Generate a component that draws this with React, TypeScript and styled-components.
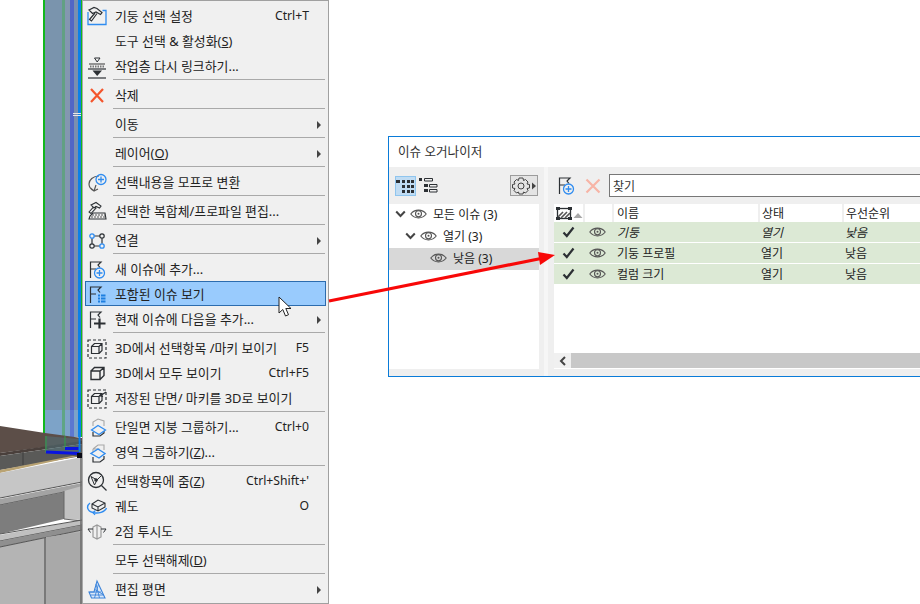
import React from "react";
import styled, { createGlobalStyle } from "styled-components";

const Global = createGlobalStyle`
  html, body { margin: 0; padding: 0; background: #fff; }
  body { font-family: "Noto Sans", "Noto Sans CJK KR", sans-serif; }
`;

const Page = styled.div`
  position: relative;
  width: 920px;
  height: 604px;
  overflow: hidden;
  background: #fff;
`;
const SceneSvg = styled.svg`
  position: absolute;
  left: 0;
  top: 0;
`;
const ArrowSvg = styled.svg`
  position: absolute;
  left: 0;
  top: 0;
  pointer-events: none;
`;

/* context menu */
const Menu = styled.div`
  position: absolute;
  left: 82px;
  top: 0;
  width: 247px;
  height: 604px;
  box-sizing: border-box;
  padding: 3px 2px 0 2px;
  background: #f0f0f0;
  border: 1px solid #a0a0a0;
  border-left-color: #a8a8a8;
  color: #222;
  font-size: 12.9px;
  isolation: isolate;
`;
const Row = styled.div<{ $active?: boolean }>`
  display: flex;
  align-items: center;
  height: 25px;
  box-sizing: border-box;
  padding-right: 17px;
  position: relative;
  ${(p) =>
    p.$active
      ? `&::before {
          content: "";
          position: absolute;
          inset: -1px 0 1px 0;
          z-index: -1;
          background: #99cbfd;
          border: 1px solid #2c6cae;
        }`
      : ""}
`;
const IconSlot = styled.span`
  flex: 0 0 24px;
  width: 24px;
  height: 24px;
  margin-right: 6px;
  display: flex;
`;
const Label = styled.span`
  flex: 1;
  white-space: pre;
  line-height: 1;
`;
const Shortcut = styled.span`
  white-space: pre;
  font-size: 12.2px;
  line-height: 1;
`;
const SubArrow = styled.span`
  position: absolute;
  right: 5px;
  top: 9px;
  width: 0;
  height: 0;
  border-left: 4px solid #444;
  border-top: 4px solid transparent;
  border-bottom: 4px solid transparent;
`;
const Sep = styled.div`
  height: 4px;
  margin: 0 1px 0 28px;
  box-sizing: border-box;
  border-top: 1px solid #a9a9a9;
`;
const Mn = styled.span`
  text-decoration: underline;
  text-underline-offset: 1px;
`;
const Cursor = styled.svg`
  position: absolute;
  left: 195px;
  top: 295px;
`;

/* organizer window */
const Organizer = styled.div`
  position: absolute;
  left: 388px;
  top: 136px;
  width: 600px;
  height: 241px;
  box-sizing: border-box;
  border: 1px solid #0a7bd8;
  display: flex;
  flex-direction: column;
  background: #efefef;
  color: #222;
  font-size: 12px;
`;
const TitleBar = styled.div`
  height: 30px;
  flex: 0 0 30px;
  box-sizing: border-box;
  background: #fff;
  display: flex;
  align-items: center;
  padding: 0 0 4px 9px;
  font-size: 12.6px;
  color: #333;
`;
const Panes = styled.div`
  flex: 1;
  display: flex;
  min-height: 0;
`;
const LeftPane = styled.div`
  width: 150px;
  flex: 0 0 150px;
  display: flex;
  flex-direction: column;
`;
const Divider = styled.div`
  flex: 0 0 10px;
  box-sizing: border-box;
  border-left: 5px solid #efefef;
  border-right: 1px solid #efefef;
  background: #f6f6f6;
`;
const RightPane = styled.div`
  flex: 1;
  display: flex;
  flex-direction: column;
  padding-left: 5px;
  min-width: 0;
`;
const LeftTools = styled.div`
  height: 37px;
  flex: 0 0 37px;
  display: flex;
  align-items: center;
  padding: 0 1px 0 6px;
  box-sizing: border-box;
`;
const ToggleOn = styled.span`
  width: 21px;
  height: 20px;
  box-sizing: border-box;
  background: #c0dcf3;
  border: 1px solid #8fc5ee;
  display: flex;
  align-items: center;
  justify-content: center;
`;
const ToggleOff = styled.span`
  width: 21px;
  height: 20px;
  margin-left: 2px;
  display: flex;
  align-items: center;
  justify-content: center;
`;
const GearButton = styled.span`
  margin-left: auto;
  width: 28px;
  height: 21px;
  box-sizing: border-box;
  background: #e4e4e4;
  border: 1px solid #9c9c9c;
  display: flex;
  align-items: center;
  justify-content: center;
`;
const Tree = styled.div`
  height: 165px;
  flex: 0 0 165px;
  background: #fff;
`;
const TreeRow = styled.div<{ $level: number; $selected?: boolean }>`
  height: 22px;
  display: flex;
  align-items: center;
  box-sizing: border-box;
  padding-left: ${(p) => 6 + p.$level * 10}px;
  padding-bottom: 2px;
  background: ${(p) => (p.$selected ? "#d8d8d8" : "transparent")};
`;
const ChevronSlot = styled.span<{ $hidden?: boolean }>`
  width: 11px;
  height: 8px;
  margin-right: 4px;
  display: flex;
  visibility: ${(p) => (p.$hidden ? "hidden" : "visible")};
`;
const TreeLabel = styled.span`
  margin-left: 6px;
  white-space: pre;
`;
const RightTools = styled.div`
  height: 37px;
  flex: 0 0 37px;
  display: flex;
  align-items: center;
  box-sizing: border-box;
`;
const FlagSlot = styled.span`
  width: 24px;
  height: 24px;
  display: flex;
`;
const XSlot = styled.span`
  width: 24px;
  height: 24px;
  margin-left: 3px;
  display: flex;
`;
const SearchBox = styled.div`
  margin-left: 4px;
  flex: 1;
  height: 23px;
  box-sizing: border-box;
  border: 1px solid #777;
  background: #fff;
  display: flex;
  align-items: center;
  padding-left: 3px;
  color: #333;
`;
const Table = styled.div`
  height: 165px;
  flex: 0 0 165px;
  background: #fff;
  display: flex;
  flex-direction: column;
`;
const COLS = "29px 29px 146px 84px 1fr";
const HeaderRow = styled.div`
  display: grid;
  grid-template-columns: ${COLS};
  height: 18px;
  flex: 0 0 18px;
  background: #fff;
`;
const HeadCell = styled.div<{ $first?: boolean; $pad?: number }>`
  box-sizing: border-box;
  border-left: ${(p) => (p.$first ? "0" : "2px solid #efefef")};
  padding-left: ${(p) => p.$pad ?? 2}px;
  display: flex;
  align-items: center;
`;
const DataRow = styled.div<{ $italic?: boolean }>`
  display: grid;
  grid-template-columns: ${COLS};
  height: 20px;
  flex: 0 0 20px;
  margin-bottom: 1px;
  background: #dce9d5;
  font-style: ${(p) => (p.$italic ? "italic" : "normal")};
`;
const DataCell = styled.div<{ $pad?: number }>`
  box-sizing: border-box;
  padding-left: ${(p) => p.$pad ?? 3}px;
  display: flex;
  align-items: center;
  white-space: pre;
`;
const IconCell = styled.div`
  display: flex;
  align-items: center;
  justify-content: center;
`;
const Filler = styled.div`
  flex: 1;
`;
const ScrollBar = styled.div`
  height: 15px;
  flex: 0 0 15px;
  margin-bottom: 1px;
  display: flex;
`;
const ScrollBtn = styled.span`
  width: 17px;
  flex: 0 0 17px;
  background: #f0f0f0;
  display: flex;
  align-items: center;
  justify-content: center;
`;
const ScrollTrack = styled.span`
  flex: 1;
  background: #c8c8c8;
`;

const D = "#2c3034";
const B = "#2f8cf0";

const base = { fill: "none", stroke: D, strokeWidth: 1.2 };
const blue = { fill: "none", stroke: B, strokeWidth: 1.3 };

const flagBase = <path d="M5.5 20V4H16L13 7L15 9.500M5.500 11H11" {...base} />;

const cube = (
  <path d="M6 9H15V17.500H6ZM6 9L9.500 5.500H19V13.500L15 17.500M15 9L19 5.500" fill="none" stroke={D} strokeWidth="1.400" />
);
const smallCube = (
  <path d="M6.500 9.500H14V16.500H6.500ZM6.500 9.500L9.500 6.500H17V13.500L14 16.500M14 9.500L17 6.500" fill="none" stroke={D} strokeWidth="1.200" />
);
const dashed = <rect x="3" y="3" width="18" height="18" fill="none" stroke={D} strokeWidth="1.200" strokeDasharray="3 2" />;

const icons: Record<string, React.ReactNode> = {
  hammer: (
    <>
      <path d="M3 7V19.500H21V5.500H17.500" {...blue} />
      <path d="M10 8L4.500 14.500L6.500 16L12 8.500" fill="#f0f0f0" stroke={D} strokeWidth="1.200" />
      <path d="M4 5L9 2.500L12 3.500L17 7.500L15.500 9.500L11 7L7.500 8.500Z" fill="#f0f0f0" stroke={D} strokeWidth="1.200" />
    </>
  ),
  level: (
    <>
      <path d="M9.5 3H15L12.2 7Z" {...base} strokeWidth={1} />
      <path d="M4 9H20" {...base} stroke="#555" />
      <path d="M5 11.5H19" stroke="#777" strokeWidth="2" strokeDasharray="1.5 1" />
      <path d="M3 14H21" {...base} />
      <path d="M7.5 15.5H17L12.2 21Z" fill={D} />
      <path d="M3 23H21" {...base} />
    </>
  ),
  cross: <path d="M6 5L18 18M18 5L6 18" stroke="#f4552c" strokeWidth="2.200" fill="none" />,
  morph: (
    <>
      <path d="M14 5C8 5 4 9 4 13C4 16 6 18.500 9 20L11 14M9 20L5.500 17M9 20L13 18" {...base} stroke="#555" />
      <circle cx="16" cy="8.500" r="5" fill="#f0f0f0" {...blue} />
      <path d="M13 8.500H19M16 5.500V11.500" {...blue} />
    </>
  ),
  profile: (
    <>
      <path d="M4 12L9 6.500L11 8L6 13.500Z" fill="#f0f0f0" stroke={D} strokeWidth="1.100" />
      <path d="M6 5L11 2.500L16 6L14.500 8L11 6.500L9 8Z" fill="#f0f0f0" stroke={D} strokeWidth="1.100" />
      <path d="M8 13H20L21 19H4L5 16Z" fill="#f0f0f0" stroke={D} strokeWidth="1.100" />
      <path d="M7 15H20M6 17H20" stroke="#555" strokeWidth="1.200" strokeDasharray="2 1" />
    </>
  ),
  link: (
    <>
      <path d="M9.200 7H14.800M7 9.200V14.800M17 9.200V14.800M9.200 17H14.800" {...base} />
      <circle cx="7" cy="7" r="2.200" {...blue} />
      <circle cx="17" cy="7" r="2.200" {...base} />
      <circle cx="7" cy="17" r="2.200" {...base} />
      <circle cx="17" cy="17" r="2.200" {...blue} />
    </>
  ),
  flagPlus: (
    <>
      {flagBase}
      <circle cx="14.500" cy="15" r="5" fill="#f0f0f0" {...blue} />
      <path d="M11.500 15H17.500M14.500 12V18" {...blue} />
    </>
  ),
  flagList: (
    <>
      {flagBase}
      <path d="M13 12.500H15M16 12.500H20.500M13 15.500H15M16 15.500H20.500M13 18.500H15M16 18.500H20.500" stroke="#1d7fe0" strokeWidth="2" fill="none" />
    </>
  ),
  flagAdd: (
    <>
      {flagBase}
      <path d="M14.500 10.500V20.500M9 15.500H20.500" stroke={D} strokeWidth="2.200" fill="none" />
    </>
  ),
  cubeSel: (
    <>
      {dashed}
      {smallCube}
    </>
  ),
  cube: cube,
  cubeSaved: (
    <>
      {dashed}
      {smallCube}
      <path d="M21 5L15 9M15 9L18 9.500M15 9L16 6" {...base} />
    </>
  ),
  roof: (
    <>
      <path d="M8 10V6L13 3L19 5V10" fill="none" stroke="#a8a8a8" strokeWidth="1.100" />
      <path d="M8 16V20H15L19 17V14" {...base} />
      <path d="M13 9.500L20.500 14L14 18.500L6.500 14Z" fill="#f0f0f0" stroke={B} strokeWidth="1.300" />
    </>
  ),
  zone: (
    <>
      <path d="M8 8L13 4H19V9M8 8V11M8 8H14V10" fill="none" stroke="#a8a8a8" strokeWidth="1.100" />
      <path d="M8 16V21H15L19 18V15" {...base} />
      <path d="M13 8L20 12.500L14 17L6 12.500Z" fill="#f0f0f0" stroke={B} strokeWidth="1.400" />
    </>
  ),
  zoom: (
    <>
      <circle cx="11" cy="10" r="7.500" {...base} strokeWidth={1.300} />
      <path d="M16.500 15.500L21.500 20.500" {...base} strokeWidth={1.300} />
      <path d="M6 6.500L12 10L9.500 15ZM12 10L16 6" fill="none" stroke={D} strokeWidth="1" />
      <circle cx="11" cy="10" r="1.800" fill={D} />
    </>
  ),
  orbit: (
    <>
      <path d="M7 9L13 5L20 8V12L13 16L7 13ZM7 9L13 12L20 8M13 12V16" fill="#f0f0f0" stroke={D} strokeWidth="1.100" />
      <path d="M5 8C1 11 2 16 8 17.5C13 19 20 17 21.5 13" fill="none" stroke={B} strokeWidth="1.400" />
      <path d="M10 20L8 17.5L10.5 15.5" fill="none" stroke={B} strokeWidth="1.200" />
    </>
  ),
  persp: (
    <>
      <path d="M8 7L12 5L16 7V17L12 19L8 17ZM12 5V19" fill="none" stroke="#9a9a9a" strokeWidth="1.200" />
      <path d="M3 9H8M3 9L5.500 12.500M21 9H16M21 9L18.500 12.500" fill="none" stroke={D} strokeWidth="1" />
    </>
  ),
  plane: (
    <>
      <path d="M12 3L20 20H6.500L4 14H9Z" fill="#dbe8f8" stroke="#3c84da" strokeWidth="1.100" />
      <path d="M11 6L14.500 20M13.500 6L9.500 20M9 11L18 16.500M5.500 17H19M4.500 14H16" stroke="#3c84da" strokeWidth="0.900" fill="none" />
    </>
  ),
  x: <path d="M5.500 5.500L18.500 18.500M18.500 5.500L5.500 18.500" stroke="#f7b4a6" strokeWidth="2.200" fill="none" />,
};

const Icon = ({ name }: { name: string }) => (
  <svg width="24" height="24" viewBox="0 0 24 24" aria-hidden="true">
    {icons[name]}
  </svg>
);

const Eye = () => (
  <svg width="17" height="12" viewBox="0 0 17 12" aria-hidden="true">
    <path d="M.8 6C4.5.8 12.5.8 16.2 6C12.5 11.2 4.5 11.2.8 6Z" fill="none" stroke="#555" strokeWidth="1.1" />
    <circle cx="8.5" cy="5.8" r="3" fill="none" stroke="#555" strokeWidth="1.1" />
    <circle cx="8.5" cy="5.8" r="1" fill="#555" />
  </svg>
);
const Chevron = () => (
  <svg width="11" height="8" viewBox="0 0 11 8" aria-hidden="true">
    <path d="M1.2 1.5L5.5 6L9.8 1.5" fill="none" stroke="#444" strokeWidth="2" />
  </svg>
);
const Check = () => (
  <svg width="13" height="12" viewBox="0 0 13 12" aria-hidden="true">
    <path d="M1.5 6.5L4.8 10L11.5 1.5" fill="none" stroke="#2c3034" strokeWidth="2.2" />
  </svg>
);
const GridIcon = () => (
  <svg width="19" height="14" viewBox="0 0 19 14" aria-hidden="true">
    <path d="M0 1H4V4H0ZM6 1H9V4H6ZM11 1H14V4H11ZM15 1H18V4H15ZM6 6H9V9H6ZM11 6H14V9H11ZM15 6H18V9H15ZM6 11H9V14H6ZM11 11H14V14H11ZM15 11H18V14H15Z" fill="#2c3034" />
  </svg>
);
const ListIcon = () => (
  <svg width="19" height="15" viewBox="0 0 19 15" aria-hidden="true">
    <path d="M0 0H3V3H0ZM5 6H9V9H5ZM5 11H9V14H5Z" fill="#2c3034" />
    <path d="M5.5 .5H13.5V3H5.5ZM10.5 6.5H18V9H10.5ZM10.5 11.5H18V14H10.5Z" fill="none" stroke="#2c3034" />
  </svg>
);
const GearIcon = () => (
  <svg width="24" height="18" viewBox="0 0 24 18" aria-hidden="true">
    <path d="M7 1H11L11.5 3.5L13.5 2.5L16 5L15 7L17.5 7.5V11L15 11.5L16 13.5L13.5 16L11.5 15L11 17H7L6.5 15L4.5 16L2 13.5L3 11.5L.5 11V7.5L3 7L2 5L4.500 2.500L6.500 3.500Z" fill="none" stroke="#444" strokeWidth="1" />
    <circle cx="9" cy="9" r="3" fill="none" stroke="#444" />
    <path d="M20 5.500L24 9L20 12.500Z" fill="#444" />
  </svg>
);
const HeaderMark = () => (
  <svg width="27" height="13" viewBox="0 0 27 13" aria-hidden="true">
    <rect x="1.500" y="1.500" width="13" height="10" fill="none" stroke="#2c3034" strokeWidth="1.300" />
    <path d="M2 10L7 5M5 11L11 5M9 11L14 6" stroke="#555" strokeWidth="1.600" />
    <path d="M0 0H4V3H0ZM12 0H16V3H12ZM0 10H4V13H0ZM12 10H16V13H12Z" fill="#2c3034" />
    <path d="M17.500 11L22 6L26.500 11Z" fill="#a8a8a8" />
  </svg>
);
const ScrollLeft = () => (
  <svg width="8" height="10" viewBox="0 0 8 10" aria-hidden="true">
    <path d="M6 1L2 5L6 9" fill="none" stroke="#444" strokeWidth="2" />
  </svg>
);

type Item =
  | "sep"
  | { icon?: string; label: React.ReactNode; key?: string; sub?: boolean; active?: boolean };

const items: Item[] = [
  { icon: "hammer", label: "기둥 선택 설정", key: "Ctrl+T" },
  { label: <>도구 선택 &amp; 활성화(<Mn>S</Mn>)</> },
  { icon: "level", label: "작업층 다시 링크하기..." },
  "sep",
  { icon: "cross", label: "삭제" },
  "sep",
  { label: "이동", sub: true },
  "sep",
  { label: <>레이어(<Mn>O</Mn>)</>, sub: true },
  "sep",
  { icon: "morph", label: "선택내용을 모프로 변환" },
  "sep",
  { icon: "profile", label: "선택한 복합체/프로파일 편집..." },
  "sep",
  { icon: "link", label: "연결", sub: true },
  "sep",
  { icon: "flagPlus", label: "새 이슈에 추가..." },
  { icon: "flagList", label: "포함된 이슈 보기", active: true },
  { icon: "flagAdd", label: "현재 이슈에 다음을 추가...", sub: true },
  "sep",
  { icon: "cubeSel", label: "3D에서 선택항목 /마키 보이기", key: "F5" },
  { icon: "cube", label: "3D에서 모두 보이기", key: "Ctrl+F5" },
  { icon: "cubeSaved", label: "저장된 단면/ 마키를 3D로 보이기" },
  "sep",
  { icon: "roof", label: "단일면 지붕 그룹하기...", key: "Ctrl+0" },
  { icon: "zone", label: <>영역 그룹하기(<Mn>Z</Mn>)...</> },
  "sep",
  { icon: "zoom", label: <>선택항목에 줌(<Mn>Z</Mn>)</>, key: "Ctrl+Shift+'" },
  { icon: "orbit", label: "궤도", key: "O" },
  { icon: "persp", label: "2점 투시도" },
  "sep",
  { label: <>모두 선택해제(<Mn>D</Mn>)</> },
  "sep",
  { icon: "plane", label: "편집 평면", sub: true },
];

const issues = [
  { name: "기둥", state: "열기", prio: "낮음", italic: true },
  { name: "기둥 프로필", state: "열기", prio: "낮음" },
  { name: "컬럼 크기", state: "열기", prio: "낮음" },
];

const Scene = () => (
  <SceneSvg width="82" height="604" viewBox="0 0 82 604" aria-hidden="true">
    <rect x="45" y="0" width="17" height="437" fill="#7a94ad" />
    <rect x="62" y="0" width="3" height="437" fill="#62a083" />
    <rect x="65" y="0" width="5" height="437" fill="#8497b0" />
    <rect x="70" y="0" width="4" height="437" fill="#5166c6" />
    <rect x="74" y="0" width="4" height="437" fill="#7a8fb0" />
    <rect x="78" y="0" width="3" height="437" fill="#0a80e8" />
    <rect x="43" y="0" width="2" height="437" fill="#12b81e" />
    <rect x="81" y="0" width="1" height="437" fill="#12b81e" />
    <rect x="73" y="113" width="8" height="1" fill="#e8e8e8" />
    <rect x="73" y="115" width="8" height="1" fill="#e8e8e8" />
    <rect x="45" y="410" width="33" height="27" fill="#7da3c8" />
    <rect x="62" y="410" width="3" height="27" fill="#5fa585" />
    <rect x="70" y="410" width="4" height="27" fill="#5c78d0" />
    {/* roof slab */}
    <polygon points="0,426 45,433 82,438 82,442 0,453" fill="#5c4e48" />
    <polygon points="0,453 82,441 82,444 0,456" fill="#4a403c" />
    <polygon points="0,456 82,444 82,456 0,470" fill="#5a5a58" />
    <path d="M23 452V465" stroke="#3c3c3c" />
    <polygon points="45,436 78,439 78,452 45,453" fill="#4f7a86" opacity="0.45" />
    <path d="M46 436V452M65 436V449" stroke="#30a048" strokeWidth="2" opacity="0.5" />
    <polygon points="0,470 72,456 78,456 0,473" fill="#b9a373" />
    {/* fascia */}
    <polygon points="0,473 82,457 82,482 0,498" fill="#c6c6c6" />
    <path d="M0 498L82 482" stroke="#555" strokeWidth="1.200" />
    <polygon points="0,499 82,483 82,488 0,505" fill="#a3a3a3" />
    <path d="M0 505L64 492" stroke="#555" />
    <polygon points="0,505 64,492 64,519 0,534" fill="#7d7d7d" />
    <polygon points="64,491 82,486 82,520 64,519" fill="#c2c2c2" />
    <path d="M64 491V519M64 519L82 521" stroke="#666" />
    <polygon points="0,535 82,520 82,525 0,541" fill="#c0c0c0" />
    <path d="M0 534L82 520M0 541L82 525" stroke="#555" />
    <polygon points="0,541 82,525 82,530 0,547" fill="#8f8f8f" />
    <polygon points="0,547 82,530 82,604 0,604" fill="#b4b4b4" />
    <path d="M0 547L82 530" stroke="#555" />
    <polygon points="46,537 82,532 82,604 46,604" fill="#a9a9a9" />
    <path d="M45 538V604" stroke="#666" strokeWidth="1.500" />
    <path d="M81 457V604" stroke="#6a6a6a" strokeWidth="1.500" />
    {/* selection */}
    <path d="M46 452L79 453.500" stroke="#0a14e0" strokeWidth="3" />
    <path d="M65 448.500H79" stroke="#0a14e0" strokeWidth="3" />
    <path d="M79.500 437V452" stroke="#0a80e8" strokeWidth="2" />
    <rect x="77" y="453" width="5" height="5" fill="#0a0a14" />
  </SceneSvg>
);

export default function App() {
  return (
    <Page>
      <Global />
      <Scene />
      <Menu>
        {items.map((it, i) =>
          it === "sep" ? (
            <Sep key={i} />
          ) : (
            <Row key={i} $active={it.active}>
              <IconSlot>{it.icon ? <Icon name={it.icon} /> : null}</IconSlot>
              <Label>{it.label}</Label>
              {it.key ? <Shortcut>{it.key}</Shortcut> : null}
              {it.sub ? <SubArrow /> : null}
            </Row>
          )
        )}
        <Cursor width="14" height="22" viewBox="0 0 14 22" aria-hidden="true">
          <path d="M1 1V17L4.800 13.500L7.500 20L10.500 18.700L7.800 12.500L13 12.500Z" fill="#fff" stroke="#222" strokeWidth="1" />
        </Cursor>
      </Menu>
      <Organizer>
        <TitleBar>이슈 오거나이저</TitleBar>
        <Panes>
          <LeftPane>
            <LeftTools>
              <ToggleOn><GridIcon /></ToggleOn>
              <ToggleOff><ListIcon /></ToggleOff>
              <GearButton><GearIcon /></GearButton>
            </LeftTools>
            <Tree>
              <TreeRow $level={0}>
                <ChevronSlot><Chevron /></ChevronSlot>
                <Eye /><TreeLabel>모든 이슈 (3)</TreeLabel>
              </TreeRow>
              <TreeRow $level={1}>
                <ChevronSlot><Chevron /></ChevronSlot>
                <Eye /><TreeLabel>열기 (3)</TreeLabel>
              </TreeRow>
              <TreeRow $level={2} $selected>
                <ChevronSlot $hidden />
                <Eye /><TreeLabel>낮음 (3)</TreeLabel>
              </TreeRow>
            </Tree>
          </LeftPane>
          <Divider />
          <RightPane>
            <RightTools>
              <FlagSlot><Icon name="flagPlus" /></FlagSlot>
              <XSlot><Icon name="x" /></XSlot>
              <SearchBox>찾기</SearchBox>
            </RightTools>
            <Table>
              <HeaderRow>
                <HeadCell $first><HeaderMark /></HeadCell>
                <HeadCell />
                <HeadCell $pad={3}>이름</HeadCell>
                <HeadCell>상태</HeadCell>
                <HeadCell>우선순위</HeadCell>
              </HeaderRow>
              {issues.map((r) => (
                <DataRow key={r.name} $italic={r.italic}>
                  <IconCell><Check /></IconCell>
                  <IconCell><Eye /></IconCell>
                  <DataCell $pad={5}>{r.name}</DataCell>
                  <DataCell>{r.state}</DataCell>
                  <DataCell>{r.prio}</DataCell>
                </DataRow>
              ))}
              <Filler />
              <ScrollBar>
                <ScrollBtn><ScrollLeft /></ScrollBtn>
                <ScrollTrack />
              </ScrollBar>
            </Table>
          </RightPane>
        </Panes>
      </Organizer>
      <ArrowSvg width="920" height="604" viewBox="0 0 920 604" aria-hidden="true">
        <path d="M329 301L541 258.500" stroke="#f80808" strokeWidth="3.200" />
        <polygon points="555,255 538,252 540,265" fill="#f80808" />
      </ArrowSvg>
    </Page>
  );
}
